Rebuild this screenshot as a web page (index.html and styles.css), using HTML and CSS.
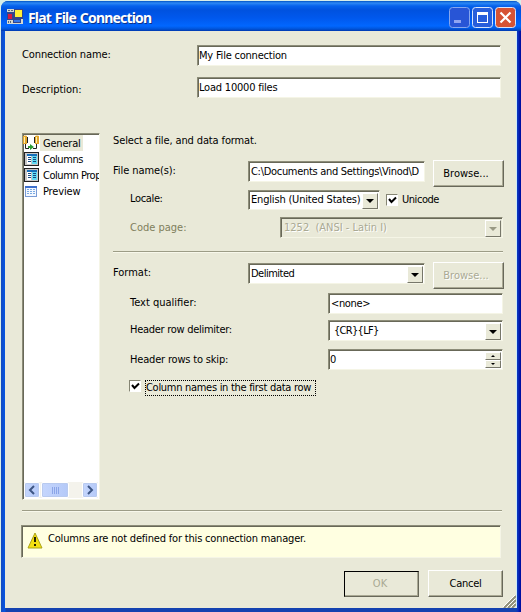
FILE: index.html
```html
<!DOCTYPE html>
<html lang="en">
<head>
<meta charset="utf-8">
<title>Flat File Connection</title>
<link rel="stylesheet" href="styles.css">
</head>
<body>
<div class="window">
  <header class="titlebar">
    <svg class="app-icon" width="16" height="15" viewBox="0 0 16 15"><path fill="#d5d8cf" d="M0 0h16v15H0z"/><path fill="#33458c" d="M0 3h7v8H0zM7 0h9v10H7zM6 10h8v4H6z"/><path fill="#d51b43" d="M1 5h4v5H1z"/><path fill="#ffef37" d="M8 1h7v7H8z"/><path fill="#3478e8" d="M7 11h6v2H7z"/><path fill="#59677d" d="M1 1h2v1H1zM4 1h2v1H4zM1 12h1v2H1zM3 12h1v2H3z"/></svg>
    <h1>Flat File Connection</h1>
    <div class="controls">
      <svg width="21" height="21" viewBox="0 0 21 21"><rect class="c-min" x=".5" y=".5" width="20" height="20" rx="3"/><path fill="#8fa5f2" d="M5 13h7v3H5z"/></svg>
      <svg width="21" height="21" viewBox="0 0 21 21"><rect class="c-max" x=".5" y=".5" width="20" height="20" rx="3"/><path fill="#fff" fill-rule="evenodd" d="M5 5h11v11H5zM6 8v7h9V8z"/></svg>
      <svg width="21" height="21" viewBox="0 0 21 21"><rect class="c-close" x=".5" y=".5" width="20" height="20" rx="3"/><path stroke="#fff" stroke-width="2.2" d="M5.500 5.500l10 10M15.500 5.500l-10 10"/></svg>
    </div>
  </header>
  <main class="client">
    <div class="row name-row"><label class="t-name">Connection name:</label><div class="field"><span class="t-nameval">My File connection</span></div></div>
    <div class="row desc-row"><label class="t-desc">Description:</label><div class="field"><span class="t-nameval">Load 10000 files</span></div></div>
    <div class="middle">
      <nav class="list">
        <ul>
          <li class="selected"><svg width="16" height="16" viewBox="0 0 16 16"><path fill="#e3a72c" d="M0 1q2.500-1 4 0v8H0zM12 1q2-1 4 0v8h-4z"/><path fill="#fff1b3" d="M1 2h1v6H1zM13 2h1v6h-1z"/><path fill="none" stroke="#222" d="M2.500 9v4.500H6M13.500 9v4.500H10M4.500 2v6M11.500 2v6"/><path fill="#2e9b35" d="M5 11h2V9l4 3-4 3v-2H5z"/></svg><span class="t-general">General</span></li>
          <li><svg width="16" height="16" viewBox="0 0 16 16"><path fill="#222" d="M1 1h15v14H1z"/><path fill="#c8c8c8" d="M2 2h13v12H2z"/><path fill="#176fba" d="M4 3h10v2H4z"/><path fill="#fff" d="M4 5h4v8H4z"/><path fill="#60dcf5" d="M9 5h5v8H9z"/><path stroke="#174a82" d="M5 6.500h3M5 8.500h3M5 10.500h3M10 6.500h3M10 8.500h3M10 10.500h3"/></svg><span class="t-cols">Columns</span></li>
          <li><svg width="16" height="16" viewBox="0 0 16 16"><path fill="#222" d="M1 1h15v14H1z"/><path fill="#c8c8c8" d="M2 2h13v12H2z"/><path fill="#176fba" d="M4 3h10v2H4z"/><path fill="#fff" d="M4 5h4v8H4z"/><path fill="#60dcf5" d="M9 5h5v8H9z"/><path stroke="#174a82" d="M5 6.500h3M5 8.500h3M5 10.500h3M10 6.500h3M10 8.500h3M10 10.500h3"/></svg><span class="t-prop">Column Prop</span></li>
          <li><svg width="16" height="16" viewBox="0 0 16 16"><path fill="#799bd5" d="M2 3h12v11H2z"/><path fill="#3c6fcc" d="M2 3h12v2H2z"/><path fill="#f4f8ff" d="M3 5h10v8H3z"/><path stroke="#7aaae1" d="M4 6.500h2M7 6.500h2M10 6.500h2M4 8.500h2M7 8.500h2M10 8.500h2M4 10.500h2M7 10.500h2M10 10.500h2"/></svg><span class="t-preview">Preview</span></li>
        </ul>
        <div class="scrollbar">
          <i class="sb"><svg width="14" height="14"><path d="M9 3L5 7l4 4" fill="none" stroke="#3d5684" stroke-width="2"/></svg></i>
          <i class="sb thumb"><svg width="9" height="7"><path d="M1.500 0v7M3.500 0v7M5.500 0v7M7.500 0v7" stroke="#8ba5e8"/></svg></i>
          <i class="sb end"><svg width="14" height="14"><path d="M5 3l4 4-4 4" fill="none" stroke="#3d5684" stroke-width="2"/></svg></i>
        </div>
      </nav>
      <section class="form">
        <p class="intro"><span class="t-intro">Select a file, and data format.</span></p>
        <div class="row file-row"><label class="t-file">File name(s):</label><div class="field"><span class="t-path">C:\Documents and Settings\Vinod\D</span></div><button><span class="t-browse">Browse...</span></button></div>
        <div class="row locale-row"><label class="t-locale">Locale:</label><div class="field combo"><span class="t-english">English (United States)</span><i class="drop"></i></div><span class="check"><svg width="11" height="11"><path d="M2 4l2.500 3L9 2.500" fill="none" stroke="#000" stroke-width="2"/></svg></span><span class="unicode t-unicode">Unicode</span></div>
        <div class="row page-row disabled"><label class="t-page">Code page:</label><div class="field combo"><span class="t-ansi">1252&nbsp; (ANSI - Latin I)</span><i class="drop"></i></div></div>
        <hr>
        <div class="row format-row"><label class="t-format">Format:</label><div class="field combo"><span class="t-delim">Delimited</span><i class="drop"></i></div><button class="disabled"><span class="t-browse">Browse...</span></button></div>
        <div class="row qualifier-row"><label class="t-qual">Text qualifier:</label><div class="field"><span class="t-none">&lt;none&gt;</span></div></div>
        <div class="row delimiter-row"><label class="t-header">Header row delimiter:</label><div class="field combo"><span class="t-crlf">{CR}{LF}</span><i class="drop"></i></div></div>
        <div class="row skip-row"><label class="t-skip">Header rows to skip:</label><div class="field combo"><span class="t-zero">0</span><div class="spinner"><i></i><i></i></div></div></div>
        <div class="row first-row"><span class="check"><svg width="11" height="11"><path d="M2 4l2.500 3L9 2.500" fill="none" stroke="#000" stroke-width="2"/></svg></span><div class="focus"><span class="t-first">Column names in the first data row</span></div></div>
      </section>
    </div>
    <hr class="bottom-line">
    <div class="warning"><svg width="16" height="17" viewBox="0 0 16 17"><path d="M8 1L15 16H1z" fill="#f3df12" stroke="#aaa31a" stroke-linejoin="round"/><path d="M8 5v5M8 12v2" stroke="#252000" stroke-width="2"/></svg><span class="t-warn">Columns are not defined for this connection manager.</span></div>
    <footer><button class="ok"><span class="t-ok">OK</span></button><button><span class="t-cancel">Cancel</span></button></footer>
    <svg class="grip" width="13" height="13"><path d="M1 13L13 1M5 13l8-8M9 13l4-4" stroke="#908f79" stroke-width="2"/><path d="M0 12L12 0M4 12l8-8M8 12l4-4" stroke="#fff"/></svg>
  </main>
</div>
</body>
</html>
```
FILE: styles.css
```css
* { box-sizing: border-box; }
body { margin: 0; width: 521px; height: 612px; overflow: hidden; background: #d8eee9; font: 11px/14px "DejaVu Sans Condensed", "DejaVu Sans", sans-serif; color: #000; }
.window { margin: 1px 0 0 1px; width: 520px; height: 611px; padding: 0 4px 3px; background: linear-gradient(90deg, #1649bb, #0754df 3px, #0754df 4px, #1442b0 5px, #1442b0 515px, #0a2fc0 517px, #0010a1 519px); border-radius: 7px 7px 0 0; overflow: hidden; }
.titlebar { height: 30px; margin: 0 -4px; padding: 0 5px 0 6px; display: flex; align-items: center; background: linear-gradient(#0053c5, #2d89f5 2px, #0562ec 5px, #0052df 9px, #0058ed 17px, #0167ff 25px, #0054d9 28px, #0037ae); }
h1 { margin: 4px 0 0 5px; font: bold 14px/20px "Noto Sans", sans-serif; color: #fff; text-shadow: 1px 1px #0b328a; white-space: nowrap; letter-spacing: -.82px; word-spacing: 1px; }
.controls { margin-left: auto; display: flex; gap: 2px; padding-top: 3px; }
.controls rect { stroke: #d7e4fb; }
.controls .c-min { fill: #2855d6; stroke: #86a6ee; }
.c-max { fill: #285edb; }
.c-close { fill: #d65334; }
.client { height: 577px; background: #e9e9d8; padding-left: 17px; position: relative; overflow: hidden; border-right: 1px solid #cceafa; }
.row { display: flex; align-items: flex-start; white-space: nowrap; }
label { flex: none; padding-top: 3px; }
.field { height: 21px; flex: none; background: #fff; border: 1px solid; border-color: #8d8d79 #f5f5e6 #f5f5e6 #8d8d79; box-shadow: inset 1px 1px #686858; overflow: hidden; padding: 3px 2px; line-height: 14px; }
.name-row { padding-top: 14px; height: 46px; }
.name-row label, .desc-row label { width: 175px; padding-top: 3px; }
.desc-row label { padding-top: 6px; }
.name-row .field, .desc-row .field { width: 304px; padding-left: 1px; }
.desc-row { height: 56px; }
.middle { display: flex; height: 367px; }
.list { width: 78px; height: 367px; background: #fff; border: 1px solid; border-color: #8d8d79 #f5f5e6 #f5f5e6 #8d8d79; box-shadow: inset 1px 1px #686858; padding: 1px; display: flex; flex-direction: column; overflow: hidden; }
ul { list-style: none; margin: 0; padding: 0; }
li { height: 16px; display: flex; align-items: center; white-space: nowrap; }
li svg { flex: none; margin-left: -1px; }
li span { padding: 2px 2px 0 3px; margin-left: 1px; }
.selected span { background: #e9e9d8; }
.scrollbar { margin-top: auto; height: 16px; display: flex; background: #f4f3ec; }
.sb { width: 16px; height: 16px; border: 1px solid #fff; border-radius: 2px; background: linear-gradient(90deg, #c5d6fd, #b4c9f8); box-shadow: inset 0 0 0 1px #b8caef; display: flex; align-items: center; justify-content: center; }
.thumb { width: 28px; margin-left: 1px; }
.end { margin-left: auto; }
.form { width: 392px; margin-left: 13px; }
.intro { margin: 0; height: 28px; padding: 1px 0 0; }
.form label { width: 135px; }
.locale-row label, .page-row label, .qualifier-row label, .delimiter-row label, .skip-row label { padding-left: 17px; }
.file-row { height: 29px; }
.file-row .field, .format-row .field { width: 177px; }
.file-row .field { padding-right: 0; }
button { font: inherit; color: #000; background: #e9e9d8; border: 1px solid; border-color: #fff #68685a #68685a #fff; box-shadow: inset -1px -1px #aaa994; height: 27px; padding: 0; }
.file-row button, .format-row button { width: 71px; margin: -1px 0 0 8px; padding-right: 5px; }
.locale-row { height: 27px; }
.locale-row label { padding-top: 2px; }
.locale-row .field { width: 132px; height: 20px; padding: 2px; }
.drop { flex: none; width: 16px; height: 16px; background: #e9e9d8; border: 1px solid; border-color: #fff #77776a #77776a #fff; display: flex; justify-content: center; align-items: center; margin-left: auto; }
.drop::after { content: ""; border: 4px solid transparent; border-top-color: #000; border-bottom: 0; }
.combo { display: flex; }
.combo .drop { margin-top: -1px; margin-right: -1px; height: 17px; }
.locale-row .combo .drop { margin-top: 0; height: 16px; }
.check { flex: none; width: 12px; height: 12px; background: #fff; border: 1px solid #858573; border-right-color: #fff; border-bottom-color: #fff; display: flex; }
.locale-row .check { margin: 4px 0 0 6px; }
.unicode { margin: 3px 0 0 4px; }
.page-row { height: 34px; }
.page-row label { width: 167px; padding-top: 4px; color: #7f7e5c; text-shadow: none; }
.page-row .field { width: 223px; background: #e9e9d8; padding-left: 3px; }
.disabled { color: #aaa994; text-shadow: 1px 1px #fff; }
.disabled .drop::after { border-top-color: #999985; }
hr { height: 2px; margin: 0; border: 0; border-top: 1px solid #9c9c86; background: #f8f8eb; width: 390px; }
.format-row { height: 40px; padding-top: 10px; }
.form .qualifier-row label, .form .delimiter-row label, .form .skip-row label { width: 215px; }
.qualifier-row .field, .delimiter-row .field, .skip-row .field { width: 175px; }
.qualifier-row { height: 27px; }
.skip-row .field { padding-left: 1px; }
.skip-row label { padding-top: 4px; }
.delimiter-row { height: 29px; }
.skip-row { height: 31px; }
.spinner { width: 16px; height: 17px; margin: -1px -1px 0 auto; }
.spinner i { display: flex; justify-content: center; align-items: center; height: 8px; background: #e9e9d8; border: 1px solid; border-color: #fff #77776a #77776a #fff; }
.spinner i::after { content: ""; border: 2px solid transparent; border-bottom-color: #000; border-top: 0; }
.spinner i + i::after { transform: rotate(180deg); }
.first-row { padding-left: 16px; }
.focus { border: 1px dotted #000; margin-left: 4px; height: 16px; width: 171px; line-height: 14px; }
.bottom-line { width: 480px; margin: 10px 0 13px; }
.warning { width: 480px; height: 33px; margin-left: -1px; background: #ffffe1; border: 1px solid; border-color: #8d8d79 #f5f5e6 #f5f5e6 #8d8d79; box-shadow: inset 1px 1px #686858; display: flex; padding: 6px 5px; }
.warning span { margin-left: 5px; white-space: nowrap; }
footer { display: flex; justify-content: flex-end; gap: 9px; width: 481px; padding-top: 12px; }
footer button { width: 75px; height: 27px; }
footer .ok { height: 26px; margin-top: 1px; padding-right: 3px; color: #aaa994; border-color: #000 #68685a #68685a #000; }
.grip { position: absolute; right: 0; bottom: 0; }

.t-name, .t-intro { letter-spacing: -.12px; }
.t-nameval { letter-spacing: -.21px; }
.t-general { letter-spacing: -.2px; }
.t-cols, .t-prop { letter-spacing: -.45px; }
.t-preview { letter-spacing: -.15px; }
.t-file { letter-spacing: -.08px; }
.t-path { letter-spacing: -.3px; }
.t-locale { letter-spacing: -.35px; }
.t-english, .t-skip, .t-warn { letter-spacing: -.18px; }
.t-unicode { letter-spacing: -.45px; }
.t-delim { letter-spacing: -.5px; }
.t-none { letter-spacing: -.35px; }
.t-header { letter-spacing: -.28px; }
.t-crlf { letter-spacing: -.7px; padding-left: 3px; }
.t-first { letter-spacing: -.29px; }
.t-cancel { letter-spacing: -.25px; }
```
